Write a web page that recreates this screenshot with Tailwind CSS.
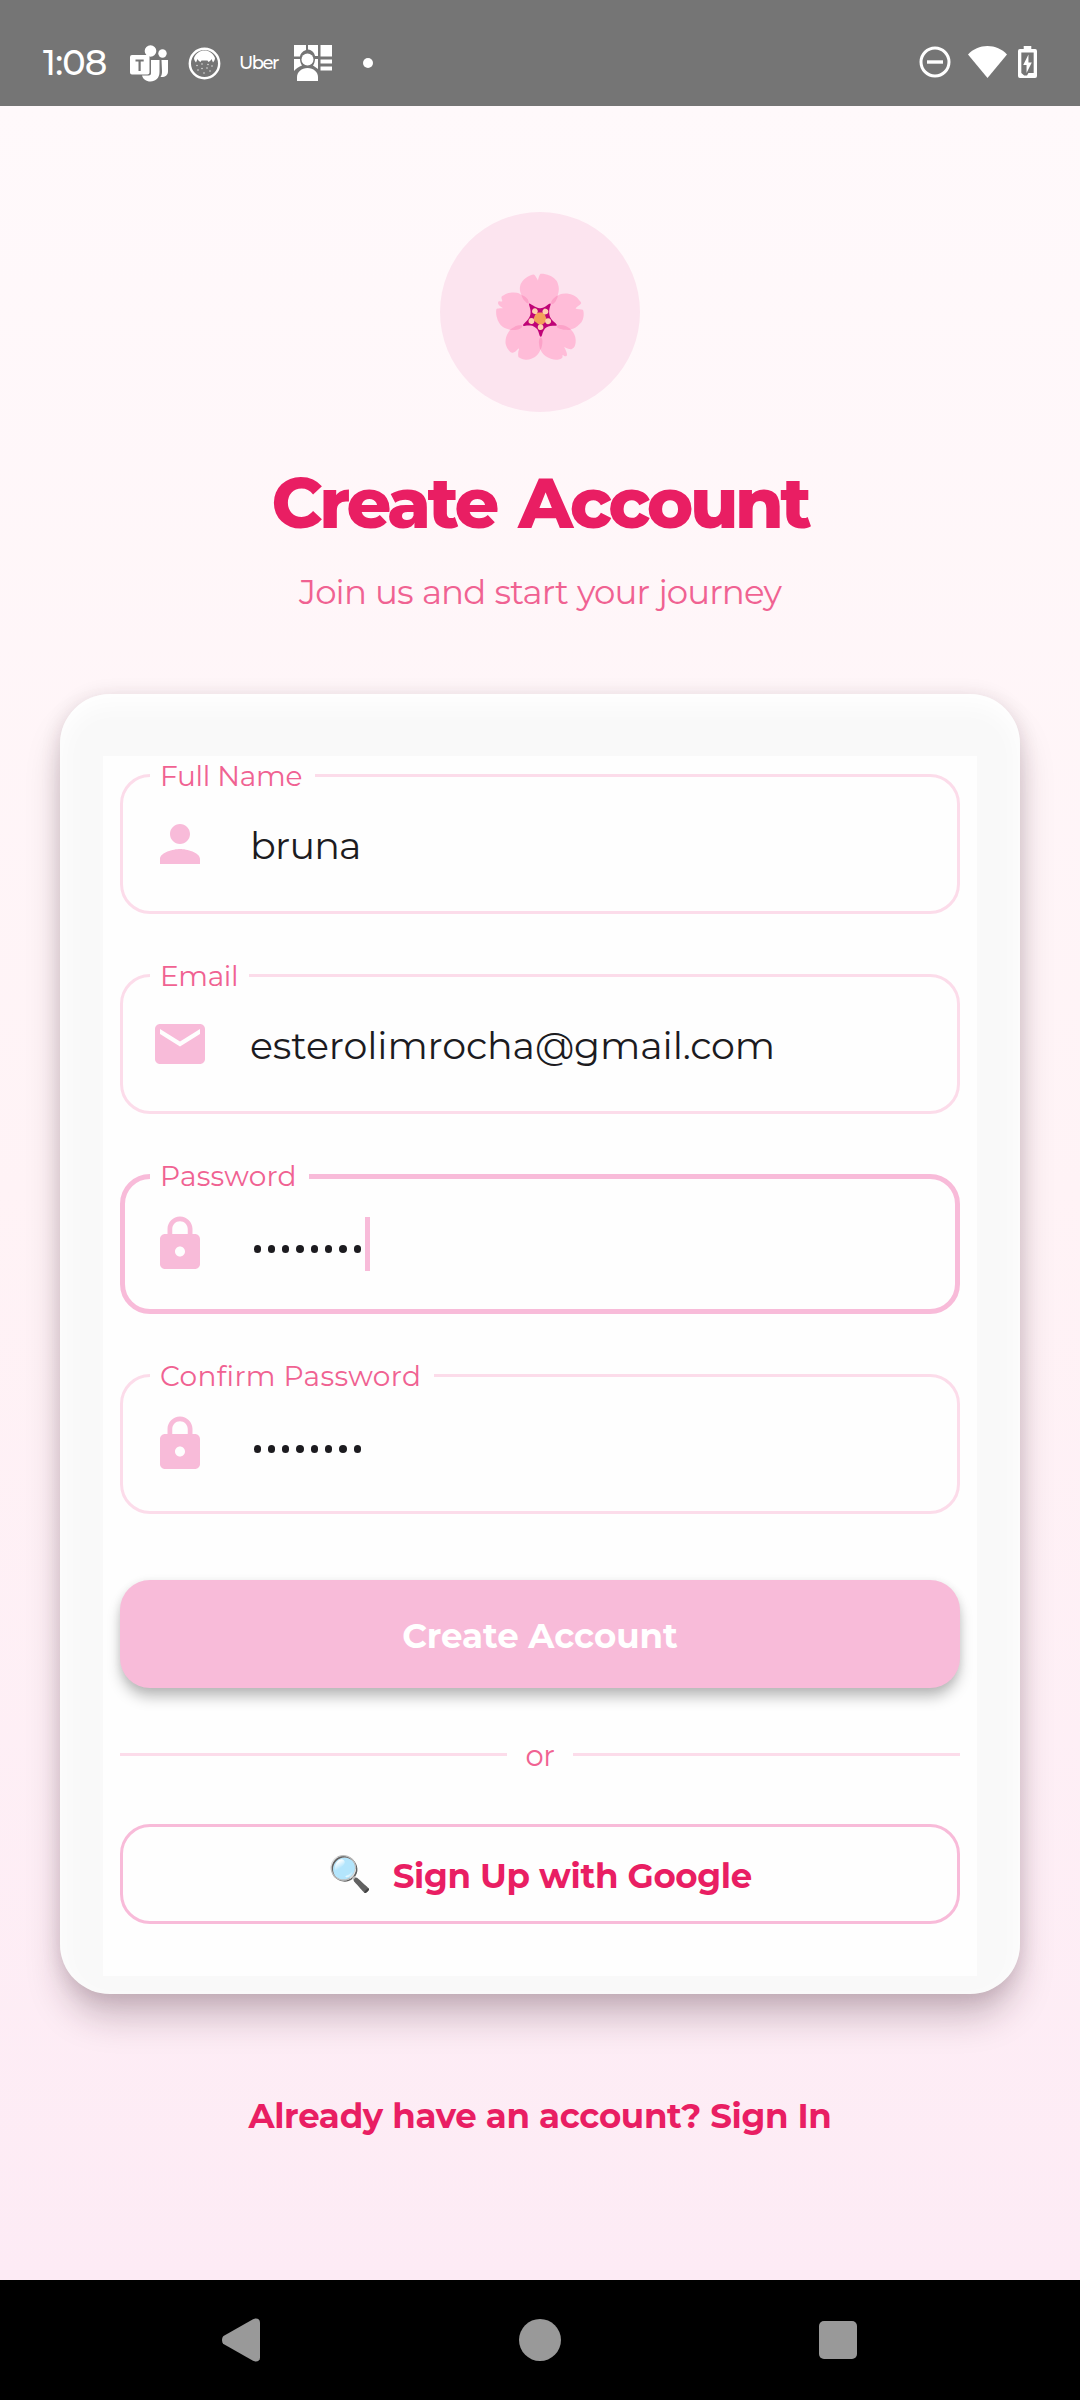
<!DOCTYPE html>
<html lang="en">
<head>
<meta charset="utf-8">
<title>Create Account</title>
<script src="https://cdn.jsdelivr.net/npm/@tailwindcss/browser@4"></script>
</head>
<body class="flex h-[2400px] w-[1080px] flex-col overflow-hidden font-[Montserrat,Inter,sans-serif] font-[450] antialiased">

<!-- Status bar -->
<header class="flex h-[106px] shrink-0 items-end justify-between bg-[#757575] pr-[43px] pl-[43px] pb-[22px] text-white">
  <div class="flex h-[42px] items-center">
    <span class="w-[87px] text-[35px] leading-[42px] font-medium tracking-[-0.8px]">1:08</span>
    <svg class="h-[37px] w-[39px]" viewBox="0 0 39 37" fill="#fff">
      <circle cx="20.500" cy="6" r="5.800"/><circle cx="32.500" cy="8.500" r="4.200"/>
      <path d="M31.500 15h6.500v11.500c0 4-3.500 6-7.500 5.500 1.500-2 1.500-4 1.500-6z"/>
      <path d="M21 15h8.500v12c0 6-4 9.500-9 9.500-4.500 0-7.500-2.500-8.500-6h6.500c2 0 2.500-1 2.500-2.500z"/>
      <path fill-rule="evenodd" d="M2 10h15.500a2 2 0 0 1 2 2v15.500a2 2 0 0 1-2 2H2a2 2 0 0 1-2-2V12a2 2 0 0 1 2-2zM5.500 14.500v2h3v9.500h2.200v-9.500h3v-2z"/>
    </svg>
    <svg class="ml-[19px] h-[33px] w-[33px]" viewBox="0 0 33 33">
      <circle cx="16.500" cy="16.500" r="14.700" fill="none" stroke="#fff" stroke-width="2.400"/>
      <path d="M6 11C8 6 12 3.500 16.500 3.500S25 6 27 11c0 2-1 3-2 4.500l-1.500-3.500c-1 2-2 2.500-3 3l-1-1.500h-6l-1 1.500c-1-.5-2-1-3-3L8 15.500C7 14 6 13 6 11z" fill="#fff"/>
      <g fill="#ddd"><circle cx="9" cy="18.500" r=".8"/><circle cx="14" cy="17" r=".8"/><circle cx="20" cy="17.500" r=".8"/><circle cx="24" cy="19" r=".8"/><circle cx="10" cy="23" r=".8"/><circle cx="14" cy="21.500" r=".8"/><circle cx="19" cy="21" r=".8"/><circle cx="22" cy="24" r=".8"/><circle cx="16" cy="26" r=".8"/></g>
    </svg>
    <span class="ml-[18px] w-[55px] text-[18px] leading-[42px] font-medium tracking-[-1.5px]">Uber</span>
    <svg class="h-[36px] w-[38px]" viewBox="0 0 38 36" fill="#fff">
      <path d="M0 0h12v5C8 6.500 6 9 6 11.500H0zM14 0h10v11h-3c-.5-3-3-6-7-6.500zM26.500 0H38v11.500H26.500zM0 14h6c0 3 1 5 2 6.500C5 21.500 2 23.500 0 26zM21 14h3v10l-5-3.500c1-1.500 2-4 2-6.500zM26.500 14.500H38v4H26.500zM26.500 21.500H38v4H26.500z"/>
      <circle cx="13.500" cy="14.500" r="6"/><path d="M3 36v-4c0-5 4.500-9 10.500-9S24 27 24 32v4z"/>
    </svg>
    <span class="ml-[31px] size-[10px] rounded-full bg-white"></span>
  </div>
  <div class="flex h-[44px] items-center">
    <svg class="h-[32px] w-[32px]" viewBox="0 0 32 32" fill="none" stroke="#fff"><circle cx="16" cy="16" r="14" stroke-width="3"/><path d="M8 16h16" stroke-width="3.400"/></svg>
    <svg class="ml-[17px] h-[32px] w-[39px]" viewBox="0 0 39 32" fill="#fff"><path d="M19.500 32L0 8.500C5 3 12 0 19.500 0S34 3 39 8.500z"/></svg>
    <svg class="ml-[11px] h-[32px] w-[19px]" viewBox="0 0 20 32" preserveAspectRatio="none"><path fill="#fff" fill-rule="evenodd" d="M6 0h8v3h4a2 2 0 0 1 2 2v25a2 2 0 0 1-2 2H2a2 2 0 0 1-2-2V5a2 2 0 0 1 2-2h4zM3.500 6.500v20.500l3 2.500h3l1.500-2.500h5.500V6.500z"/><path fill="#fff" d="M11 8.500v8h3.500L9 27v-8H5.500z"/></svg>
  </div>
</header>

<main class="flex h-[2174px] flex-col items-center bg-linear-to-b from-[#fff9fb] via-[#fff3f6] to-[#fdebf5] pt-[106px]">
  <div class="flex size-[200px] shrink-0 items-center justify-center rounded-full bg-[#fce4ef]">
    <span class="mt-[9px] font-['Noto_Color_Emoji',sans-serif] text-[80px] leading-[90px]">🌸</span>
  </div>
  <h1 class="mt-[49px] text-[70px] leading-[84px] font-extrabold tracking-[-3.3px] [word-spacing:5px] whitespace-nowrap text-[#e91e63]">Create Account</h1>
  <p class="mt-[23px] text-[34px] leading-[48px] tracking-[-0.85px] [word-spacing:1px] whitespace-nowrap text-[#f06292]">Join us and start your journey</p>

  <section class="mt-[78px] h-[1300px] w-[960px] shrink-0 rounded-[50px] bg-[#f9f9f9] px-[43px] pt-[62px] shadow-[0_26px_36px_-4px_rgba(50,20,35,0.25),0_2px_20px_rgba(50,20,35,0.12),inset_0_10px_24px_#ffffff]">
    <form class="flex h-[1220px] flex-col bg-[#fefefe] px-[17px]">

      <fieldset class="h-[158px] rounded-[30px] border-[3px] border-[#fcdcea]">
        <legend class="ml-[27px] h-[39px] w-[165px] pt-px pl-[10px] text-[28px] leading-[39px] tracking-[-0.25px] whitespace-nowrap text-[#f06292]">Full Name</legend>
        <div class="flex h-[98px] items-center pl-[27px]">
          <svg class="size-[60px]" viewBox="0 0 24 24" fill="#f8bbd9"><path d="M12 12c2.210 0 4-1.790 4-4s-1.790-4-4-4-4 1.790-4 4 1.790 4 4 4zm0 2c-2.670 0-8 1.340-8 4v2h16v-2c0-2.660-5.330-4-8-4z"/></svg>
          <span class="mt-[3px] ml-[40px] text-[38px] tracking-[-0.8px] text-[#1c1b1f]">bruna</span>
        </div>
      </fieldset>

      <fieldset class="mt-[42px] h-[158px] rounded-[30px] border-[3px] border-[#fcdcea]">
        <legend class="ml-[27px] h-[39px] w-[99px] pt-px pl-[10px] text-[28px] leading-[39px] tracking-[-0.4px] whitespace-nowrap text-[#f06292]">Email</legend>
        <div class="flex h-[98px] items-center pl-[27px]">
          <svg class="size-[60px]" viewBox="0 0 24 24" fill="#f8bbd9"><path d="M20 4H4c-1.100 0-1.990.9-1.990 2L2 18c0 1.100.9 2 2 2h16c1.100 0 2-.9 2-2V6c0-1.100-.9-2-2-2zm0 4l-8 5-8-5V6l8 5 8-5v2z"/></svg>
          <span class="mt-[3px] ml-[40px] text-[38px] tracking-[-0.1px] text-[#1c1b1f]">esterolimrocha@gmail.com</span>
        </div>
      </fieldset>

      <fieldset class="mt-[42px] h-[158px] rounded-[30px] border-[5px] border-[#f8bbd9]">
        <legend class="ml-[25px] h-[41px] w-[159px] pl-[10px] text-[28px] leading-[41px] tracking-[0.25px] whitespace-nowrap text-[#f06292]">Password</legend>
        <div class="flex h-[94px] items-center pl-[25px]">
          <svg class="size-[60px]" viewBox="0 0 24 24" fill="#f8bbd9"><path d="M18 8h-1V6c0-2.760-2.240-5-5-5S7 3.240 7 6v2H6c-1.100 0-2 .9-2 2v10c0 1.100.9 2 2 2h12c1.100 0 2-.9 2-2V10c0-1.100-.9-2-2-2zm-6 9c-1.100 0-2-.9-2-2s.9-2 2-2 2 .9 2 2-.9 2-2 2zm3.100-9H8.900V6c0-1.710 1.390-3.100 3.100-3.100s3.100 1.390 3.100 3.100v2z"/></svg>
          <div class="mt-[10px] ml-[43.5px] flex gap-[7px] *:size-[7.3px] *:rounded-full *:bg-[#1c1b1f]"><i></i><i></i><i></i><i></i><i></i><i></i><i></i><i></i></div>
          <span class="ml-[4px] h-[54px] w-[5px] bg-[#f8bbd9]"></span>
        </div>
      </fieldset>

      <fieldset class="mt-[42px] h-[158px] rounded-[30px] border-[3px] border-[#fcdcea]">
        <legend class="ml-[27px] h-[39px] w-[284px] pt-px pl-[10px] text-[28px] leading-[39px] tracking-[0.35px] whitespace-nowrap text-[#f06292]">Confirm Password</legend>
        <div class="flex h-[98px] items-center pl-[27px]">
          <svg class="size-[60px]" viewBox="0 0 24 24" fill="#f8bbd9"><path d="M18 8h-1V6c0-2.760-2.240-5-5-5S7 3.240 7 6v2H6c-1.100 0-2 .9-2 2v10c0 1.100.9 2 2 2h12c1.100 0 2-.9 2-2V10c0-1.100-.9-2-2-2zm-6 9c-1.100 0-2-.9-2-2s.9-2 2-2 2 .9 2 2-.9 2-2 2zm3.100-9H8.900V6c0-1.710 1.390-3.100 3.100-3.100s3.100 1.390 3.100 3.100v2z"/></svg>
          <div class="mt-[10px] ml-[43.5px] flex gap-[7px] *:size-[7.3px] *:rounded-full *:bg-[#1c1b1f]"><i></i><i></i><i></i><i></i><i></i><i></i><i></i><i></i></div>
        </div>
      </fieldset>

      <button type="button" class="mt-[66px] h-[108px] shrink-0 rounded-[30px] bg-[#f8bbd9] pt-[4px] text-[34px] font-bold text-white shadow-[0_10px_14px_-1px_rgba(0,0,0,0.25),0_1px_8px_rgba(0,0,0,0.08)]">Create Account</button>

      <div class="mt-[46px] flex h-[41px] items-center text-[#f06292]">
        <span class="h-[3px] flex-1 bg-[#fcdcea]"></span>
        <span class="w-[66px] pt-[3px] text-center text-[29px] leading-[38px] tracking-[-0.3px]">or</span>
        <span class="h-[3px] flex-1 bg-[#fcdcea]"></span>
      </div>

      <button type="button" class="mt-[49px] flex h-[100px] shrink-0 items-center justify-center rounded-[30px] border-[3px] border-[#f8bbd9] text-[34px] font-bold text-[#e91e63]">
        <span class="mt-[2px] font-['Noto_Color_Emoji',sans-serif] text-[35px] leading-[40px] font-normal">🔍</span>
        <span class="mt-[4px] ml-[21px] tracking-[-0.3px]">Sign Up with Google</span>
      </button>
    </form>
  </section>

  <a class="mt-[98px] text-[34px] leading-[48px] font-bold tracking-[-0.3px] whitespace-nowrap text-[#e91e63]">Already have an account? Sign In</a>
</main>

<!-- Navigation bar -->
<nav class="flex h-[120px] shrink-0 items-center justify-between bg-black pr-[223px] pl-[222px]">
  <svg class="h-[44px] w-[38px]" viewBox="0 0 38 44" fill="#999"><path d="M1.500 18L31 1.300C34.500-.5 38 1 38 4.500v35c0 3.500-3.500 5-7 3.200L1.500 26c-2-2-2-6 0-8z"/></svg>
  <span class="size-[42px] rounded-full bg-[#999]"></span>
  <span class="size-[38px] rounded-[5px] bg-[#999]"></span>
</nav>
</body>
</html>
